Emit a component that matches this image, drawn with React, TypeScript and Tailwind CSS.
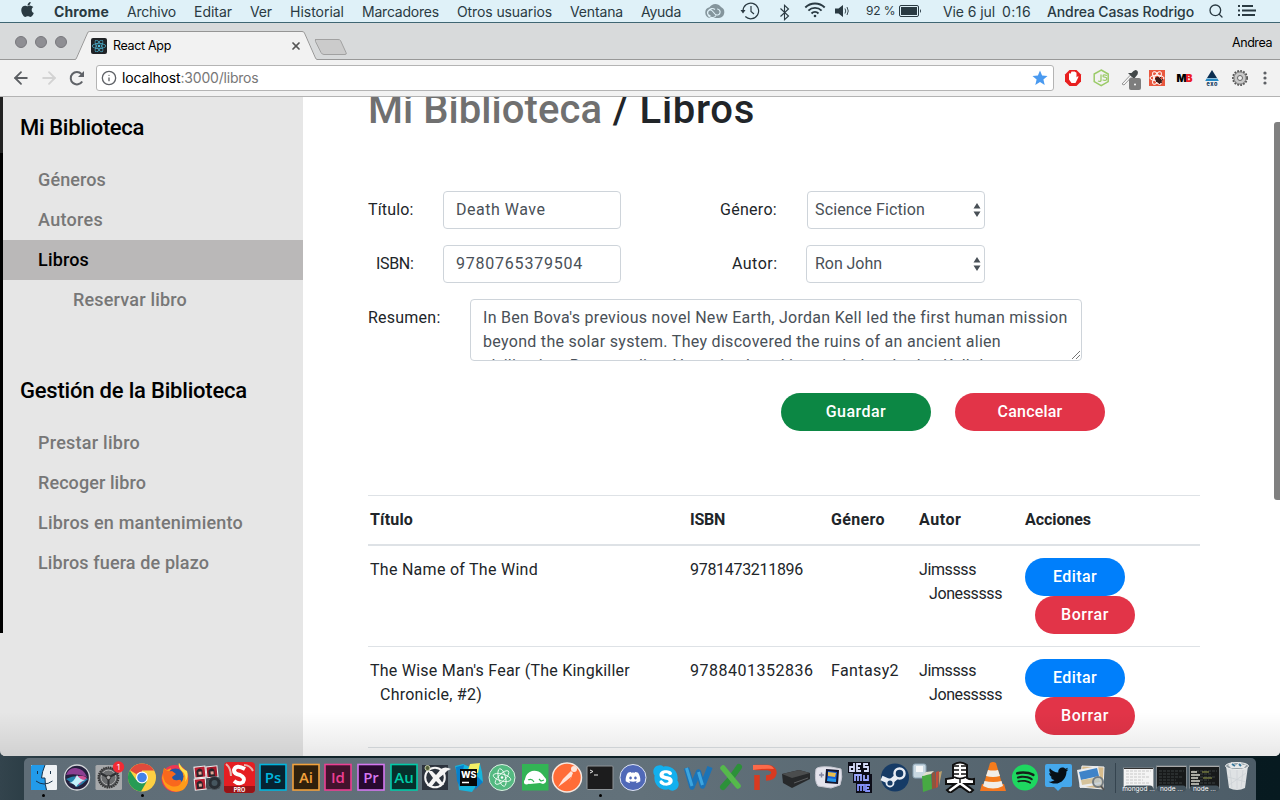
import { useLayoutEffect, useRef, type ReactNode } from "react";
import { ArrowLeft, ArrowRight, Info, Search, X } from "lucide-react";
import { FaApple, FaDiscord, FaReact, FaSkype, FaSpotify, FaTwitter } from "react-icons/fa";

/** One line of text whose tracking is adjusted to fill a given width. */
function Fit({ w, children, className = "" }: { w: number; children: string; className?: string }) {
  const ref = useRef<HTMLSpanElement>(null);
  useLayoutEffect(() => {
    const el = ref.current;
    if (!el) return;
    el.style.letterSpacing = "0px";
    const natural = el.getBoundingClientRect().width;
    el.style.letterSpacing = `${(w - natural) / children.length}px`;
  }, [w, children]);
  return (
    <span ref={ref} className={`inline-block shrink-0 whitespace-pre ${className}`}>
      {children}
    </span>
  );
}

const MENUS: [string, number][] = [
  ["Archivo", 49],
  ["Editar", 38],
  ["Ver", 22],
  ["Historial", 54],
  ["Marcadores", 77],
  ["Otros usuarios", 95],
  ["Ventana", 53],
  ["Ayuda", 40],
];

function MenuBar() {
  return (
    <div className="flex h-[23px] shrink-0 items-center border-b border-[#3f6673] bg-[#dff1f8] pl-[19px] text-[14px] text-[#2a3a42]">
      <FaApple className="mb-1 size-[17px] shrink-0" />
      <Fit w={55} className="ml-[18px] font-bold">Chrome</Fit>
      {MENUS.map(([t, w]) => (
        <Fit key={t} w={w} className="ml-[18px]">{t}</Fit>
      ))}
      <svg className="ml-[23px] h-[15px] w-[21px] shrink-0" viewBox="0 0 21 15">
        <path d="M6 14a5.500 5.500 0 0 1-.5-10.800A7 7 0 0 1 17 3a5.800 5.800 0 0 1-2 11z" fill="#84959c" />
        <path d="M12 11.500a4.500 4.500 0 1 1-1-6M6.500 11.500a2.800 2.800 0 1 1 .4-5.500c1.600.4 2.700 2.500 4 4a3 3 0 1 0 2.200-5" fill="none" stroke="#dff1f8" strokeWidth="1.100" />
      </svg>
      <svg className="ml-[15px] h-[18px] w-5 shrink-0" viewBox="0 0 20 18" fill="none" stroke="#2a3a42" strokeWidth="1.200">
        <path d="M3 9a7.800 7.800 0 1 1 2.300 5.500M11 4v5.500l3 2.500" />
        <path d="M.5 8h5L3 11.500z" fill="#2a3a42" stroke="none" />
      </svg>
      <svg className="mt-0.5 ml-[19px] h-[17px] w-3 shrink-0" viewBox="0 0 12 17" fill="none" stroke="#2a3a42" strokeWidth="1.100">
        <path d="m1.500 4.500 8 7.500-4 3.700V1.300l4 3.700-8 7.500" />
      </svg>
      <svg className="mb-0.5 ml-[13px] h-[16px] w-[22px] shrink-0" viewBox="0 0 22 16" fill="none" stroke="#2a3a42" strokeWidth="1.900">
        <path d="M1.300 5.500a13.700 13.700 0 0 1 19.400 0M4.400 8.600a9.300 9.300 0 0 1 13.200 0M7.500 11.500a5 5 0 0 1 7 0" />
        <circle cx="11" cy="14" r="1.300" fill="#2a3a42" stroke="none" />
      </svg>
      <svg className="ml-[9px] h-3 w-[14px] shrink-0" viewBox="0 0 14 12">
        <path d="M0 3.500h3.500L8 0v12L3.500 8.500H0z" fill="#2a3a42" />
        <path d="M10 3.500q1.500 2.500 0 5M12 2q2.500 4 0 8" fill="none" stroke="#2a3a42" strokeWidth=".9" />
      </svg>
      <Fit w={29.500} className="ml-[17px] text-[12px]">92 %</Fit>
      <svg className="ml-[3.500px] h-3 w-6 shrink-0" viewBox="0 0 24 12">
        <rect x=".5" y=".5" width="19" height="11" rx="1.500" fill="none" stroke="#2a3a42" />
        <path d="M2 2h16v8H2zM21 4q2 2 0 4z" fill="#2a3a42" />
      </svg>
      <Fit w={52} className="ml-5">Vie 6 jul</Fit>
      <Fit w={29} className="ml-[7px]">0:16</Fit>
      <Fit w={147} className="ml-4 font-medium">Andrea Casas Rodrigo</Fit>
      <Search className="ml-[14px] size-4 shrink-0" strokeWidth={2} />
      <svg className="ml-[14px] h-3 w-[18px] shrink-0" viewBox="0 0 18 12" fill="none" stroke="#2a3a42" strokeWidth="1.800">
        <path d="M0 1h2m2 0h11M0 5.500h2m2 0h14M0 10h2m2 0h13" />
      </svg>
    </div>
  );
}

function TabStrip() {
  return (
    <div className="flex h-9 shrink-0 items-start bg-[#d8dadb] text-[12px] text-black">
      <div className="flex h-[38px] w-[75px] items-center gap-2 pl-[15px]">
        <i className="size-3 rounded-full border border-[#77777c] bg-[#8e8e93]" />
        <i className="size-3 rounded-full border border-[#77777c] bg-[#8e8e93]" />
        <i className="size-3 rounded-full border border-[#77777c] bg-[#8e8e93]" />
      </div>
      <div className="relative h-[37px] w-[280px]">
        <svg className="absolute inset-0" width="280" height="37" viewBox="0 0 280 37">
          <path d="M0 37 12 10q.8-1.500 2-1.500h214q1.500 0 2 1.500l12 27z" fill="#f2f2f2" />
          <path d="M0 36.500q1 0 1.500-1.500L12.500 10q.5-1.500 2-1.500H227q2 0 2.500 1.500l11 25q.5 1.500 2 1.500" fill="none" stroke="#959595" />
          <path d="M240 16.500h23q2 0 2.500 1l5.500 12q1 2-1 2h-21q-2 0-3-2l-5.500-11q-.7-2 1-2" fill="#cbcbcb" stroke="#a1a1a1" />
        </svg>
        <div className="relative flex h-full items-center pt-[9px] pl-4">
          <div className="grid size-4 place-items-center rounded-[2px] bg-[#202326] text-[#50bddc]">
            <FaReact size={14} />
          </div>
          <Fit w={58} className="ml-1.5 text-[12.500px]">React App</Fit>
          <X className="ml-[119px] size-3 text-[#555]" strokeWidth={3.500} />
        </div>
      </div>
      <div className="flex-1 pt-[11px] pr-2 text-right">
        <Fit w={40} className="text-[12.500px]">Andrea</Fit>
      </div>
    </div>
  );
}

function Toolbar() {
  return (
    <div className="flex h-[38px] shrink-0 items-center border-y border-t-[#989898] border-b-[#b3b3b3] bg-[#f2f2f2] pl-[11px]">
      <ArrowLeft className="size-5 text-[#5c5f63]" strokeWidth={2.200} />
      <ArrowRight className="ml-2 size-5 text-[#d3d3d3]" strokeWidth={2.200} />
      <svg className="ml-[10px] size-4" viewBox="0 0 16 16">
        <path d="M13.200 11.500A6.200 6.200 0 1 1 12.500 4" fill="none" stroke="#5f6267" strokeWidth="2" />
        <path d="M15 1v6H9z" fill="#5f6267" />
      </svg>
      <div className="ml-[11px] flex h-[26px] w-[958px] items-center rounded-[3px] border border-[#b4b4b4] bg-white pl-1">
        <Info className="size-4 text-[#5f6267]" strokeWidth={2} />
        <div className="ml-[5px] text-[14px] leading-none text-[#777]">
          <Fit w={58.500} className="text-black">localhost</Fit>
          <Fit w={78}>:3000/libros</Fit>
        </div>
        <svg className="mr-[5px] ml-auto size-4" viewBox="0 0 16 16">
          <path d="m8 .5 2.100 5 5.400.5-4.100 3.600 1.300 5.400L8 12.100 3.300 15l1.300-5.400L.5 6l5.400-.5z" fill="#4a9af0" />
        </svg>
      </div>
      <svg className="ml-[9px] h-6 w-[216px]" viewBox="0 0 216 24">
        <path d="M6.500 4h7l4.500 4.500v7L13.500 20h-7L2 15.500v-7z" fill="#e82020" />
        <path d="M6 8q1-2 1.800 0l.4-2q1-1.600 1.800 0l.5-.6q1-.8 1.500.8 1.500-.5 1.500 1.400v4l1-1.200q1.500-.5.7 1.200L12.500 17h-4L6 13.500z" fill="#fff" />
        <path d="m38.200 4 7 4v7.600l-7 4-7-4V8z" fill="none" stroke="#9bcb68" strokeWidth="1.500" />
        <path d="M38 8.500v6q-.5 1.500-3 .5m9-5.500q-4-1.500-4 .7c0 1.600 3.800.4 3.800 2.600 0 2-2.500 2-4.200 1" fill="none" stroke="#9bcb68" strokeWidth="1.300" />
        <path d="m59 18 8.500-9 1.500 1.500-8 8.500z" fill="#f8f8f8" stroke="#969696" />
        <path d="m65 7 6 6 1.500-2 2-2.500q1.500-4-2-4.500-2 .5-4 3z" fill="#424748" />
        <rect x="66" y="12" width="12" height="12" rx="2" fill="#7d7d7d" />
        <circle cx="72" cy="18.500" r="1" fill="#fff" />
        <rect x="86" y="4" width="16" height="16" fill="#e9583f" />
        <g fill="none" stroke="#fff">
          <ellipse cx="94" cy="12" rx="7" ry="2.700" />
          <ellipse cx="94" cy="12" rx="7" ry="2.700" transform="rotate(60 94 12)" />
          <ellipse cx="94" cy="12" rx="7" ry="2.700" transform="rotate(120 94 12)" />
        </g>
        <ellipse cx="95.500" cy="14" rx="3.500" ry="2.500" transform="rotate(40 95.500 14)" fill="#3a1a17" />
        <path d="m93 16 5-5m-2 7 4-5m-8-1 7 5" stroke="#3a1a17" />
        <text x="113.500" y="16" fontSize="10.500" fontWeight="900" textLength="16" className="font-['Inter']">
          M<tspan fill="#ed1c24">B</tspan>
        </text>
        <path d="m149 4 5 8h-10z" fill="#0b2e50" />
        <path d="M143.600 12.500h10.800l1.400 2.500h-13.600z" fill="#2488c4" />
        <text x="143.500" y="19.500" fontSize="5.500" fontWeight="800" textLength="11" fill="#123b5f">exo</text>
        <circle cx="177" cy="12" r="7" fill="#bbb" stroke="#555" strokeWidth="2" strokeDasharray="1.700 1.300" />
        <circle cx="177" cy="12" r="6" fill="#c8c8c8" stroke="#888" />
        <circle cx="177" cy="12" r="2.500" fill="#eee" stroke="#666" />
        <g fill="#5d6065">
          <circle cx="202" cy="7" r="1.600" />
          <circle cx="202" cy="12" r="1.600" />
          <circle cx="202" cy="17" r="1.600" />
        </g>
      </svg>
    </div>
  );
}

function NavItem({ label, w, active, sub }: { label: string; w: number; active?: boolean; sub?: boolean }) {
  return (
    <a
      className={`flex h-10 items-center text-[18px] font-medium ${sub ? "pl-[70px]" : "pl-[35px]"} ${
        active ? "bg-[#bab8b8] text-black" : "text-[#777]"
      }`}
    >
      <Fit w={w}>{label}</Fit>
    </a>
  );
}

function Sidebar() {
  return (
    <nav className="w-[300px] shrink-0 bg-[#e6e6e6]">
      <h2 className="flex h-[63px] items-center pb-0.5 pl-[17px] text-[22px] font-medium text-black">
        <Fit w={124}>Mi Biblioteca</Fit>
      </h2>
      <NavItem label="Géneros" w={68} />
      <NavItem label="Autores" w={65} />
      <NavItem label="Libros" w={51} active />
      <NavItem label="Reservar libro" w={114} sub />
      <h2 className="mt-10 flex h-[63px] items-center pb-0.5 pl-[17px] text-[22px] font-medium text-black">
        <Fit w={227}>Gestión de la Biblioteca</Fit>
      </h2>
      <NavItem label="Prestar libro" w={102} />
      <NavItem label="Recoger libro" w={108} />
      <NavItem label="Libros en mantenimiento" w={205} />
      <NavItem label="Libros fuera de plazo" w={171} />
    </nav>
  );
}

function Field({ children, className }: { children: ReactNode; className: string }) {
  return (
    <div className={`flex h-[38px] items-center rounded border border-[#ced4da] bg-white text-[#495057] ${className}`}>
      {children}
    </div>
  );
}

function SelectArrows() {
  return (
    <svg className="mr-[3.500px] ml-auto h-[14px] w-2" viewBox="0 0 8 14">
      <path d="m4 0 3.500 5.500h-7zM4 14 .5 8.500h7z" fill="#495057" />
    </svg>
  );
}

const PILL = "flex h-[38px] items-center justify-center rounded-full font-medium text-white";

function BookForm() {
  return (
    <form className="mt-[54px]">
      <div className="flex items-center">
        <div className="w-[75px]"><Fit w={45.500}>Título:</Fit></div>
        <Field className="w-[178px] pl-3"><Fit w={89.500}>Death Wave</Fit></Field>
        <div className="ml-[99px] w-[87px]"><Fit w={57}>Género:</Fit></div>
        <Field className="w-[178px] pl-[7px]"><Fit w={110}>Science Fiction</Fit><SelectArrows /></Field>
      </div>
      <div className="mt-4 flex items-center">
        <div className="w-[75px] pl-2"><Fit w={37.500}>ISBN:</Fit></div>
        <Field className="w-[178px] pl-3"><Fit w={127}>9780765379504</Fit></Field>
        <div className="ml-[111px] w-[74px]"><Fit w={45.500}>Autor:</Fit></div>
        <Field className="w-[179px] pl-2"><Fit w={67}>Ron John</Fit><SelectArrows /></Field>
      </div>
      <div className="mt-4 flex">
        <div className="w-[102px] pt-[7px]"><Fit w={72.500}>Resumen:</Fit></div>
        <div className="relative h-[62px] w-[612px] overflow-hidden rounded border border-[#ced4da] pt-1.5 pl-3 text-[#495057]">
          <Fit w={584}>In Ben Bova's previous novel New Earth, Jordan Kell led the first human mission</Fit>
          <Fit w={518}>beyond the solar system. They discovered the ruins of an ancient alien</Fit>
          <Fit w={520}>civilization. But one alien AI survived, and it revealed to Jordan Kell that</Fit>
          <svg className="absolute right-px bottom-px size-2" viewBox="0 0 8 8" stroke="#666" strokeWidth=".9">
            <path d="m0 8 8-8M4 8l4-4" />
          </svg>
        </div>
      </div>
      <div className="mt-8 flex gap-6 pl-[413px]">
        <div className={`${PILL} w-[150px] bg-[#0c8744]`}><Fit w={60.500}>Guardar</Fit></div>
        <div className={`${PILL} w-[150px] bg-[#e23448]`}><Fit w={65}>Cancelar</Fit></div>
      </div>
    </form>
  );
}

function BookRow({ title, isbn, isbnW, genre }: { title: ReactNode; isbn: string; isbnW: number; genre?: string }) {
  return (
    <div className="grid h-[101px] grid-cols-[320px_141px_88px_106px_1fr] border-b border-[#dee2e6] pt-3 pl-0.5">
      <div>{title}</div>
      <div><Fit w={isbnW}>{isbn}</Fit></div>
      <div>{genre && <Fit w={68}>{genre}</Fit>}</div>
      <div>
        <Fit w={57}>Jimssss</Fit>
        <br />
        <Fit w={73} className="ml-2.5">Jonesssss</Fit>
      </div>
      <div>
        <div className={`${PILL} w-[100px] bg-[#007ffb]`}><Fit w={44}>Editar</Fit></div>
        <div className={`${PILL} ml-2.5 w-[100px] bg-[#e23448]`}><Fit w={48}>Borrar</Fit></div>
      </div>
    </div>
  );
}

function BookTable() {
  return (
    <section className="mt-16 w-[832px] border-t border-[#dee2e6]">
      <div className="grid h-[50px] grid-cols-[320px_141px_88px_106px_1fr] border-b-2 border-[#dee2e6] pt-3 pl-0.5 font-bold">
        <div><Fit w={43}>Título</Fit></div>
        <div><Fit w={35}>ISBN</Fit></div>
        <div><Fit w={54}>Género</Fit></div>
        <div><Fit w={42.500}>Autor</Fit></div>
        <div><Fit w={66}>Acciones</Fit></div>
      </div>
      <BookRow title={<Fit w={168}>The Name of The Wind</Fit>} isbn="9781473211896" isbnW={113} />
      <BookRow
        title={
          <>
            <Fit w={260}>The Wise Man's Fear (The Kingkiller</Fit>
            <br />
            <Fit w={102} className="ml-2.5">Chronicle, #2)</Fit>
          </>
        }
        isbn="9788401352836"
        isbnW={123.500}
        genre="Fantasy2"
      />
    </section>
  );
}

function AdobeTile({ t, c, bg }: { t: string; c: string; bg: string }) {
  return (
    <>
      <rect x="3" y="3.500" width="26" height="25.500" fill={bg} stroke={c} strokeWidth="1.600" />
      <text x="16" y="21.500" fontSize="15" fontWeight="600" textAnchor="middle" fill={c} className="font-['Open_Sans']">{t}</text>
    </>
  );
}

const DOCK: { icon: ReactNode; running?: boolean }[] = [
  {
    running: true,
    icon: (
      <>
        <rect x="3" y="4" width="26" height="25" rx="1" fill="#eef2f5" />
        <path d="M4 4h13q-3 7-3.500 13h3.500q0 7 1.500 12H3V5z" fill="#229bea" />
        <path d="M9.500 10v3M22.500 10v3M8 20q8 6 16.500 0M17 4q-3 7-3.500 13H17q0 7 1.500 12" fill="none" stroke="#19344c" strokeWidth="1" />
      </>
    ),
  },
  {
    icon: (
      <>
        <circle cx="16" cy="16.500" r="12.500" fill="#24203d" stroke="#d4d7da" strokeWidth="1.300" />
        <path d="M5 14q3-8 10-7 8 1 11 9-10-4-21-2" fill="#8c3f92" />
        <path d="M5 18q12-6 22 0-5 5-11 8-5-4-11-8" fill="#2583ad" />
        <path d="M14 16q7-3 12 1-5 3-8 7z" fill="#cf4f95" />
        <path d="M8 22q5-1 8-8 3 5 8 5-6 2-9 7-2-4-7-4" fill="#c5f0fa" />
      </>
    ),
  },
  {
    icon: (
      <>
        <rect x="2.500" y="4" width="26.500" height="25" rx="1.500" fill="#a7a9ab" />
        <circle cx="15.500" cy="16.500" r="10" fill="#505255" stroke="#333" strokeWidth="2" strokeDasharray="1.500 .8" />
        <circle cx="15.500" cy="16.500" r="7.500" fill="#6b6d6f" stroke="#b5b5b5" />
        <path d="M15.500 16.500V25m0-8.500L8 12.500m7.500 4 7.500-4" stroke="#2d2f32" strokeWidth="2" />
        <circle cx="15.500" cy="16.500" r="2.200" fill="#aaa" stroke="#333" />
        <circle cx="25.500" cy="6" r="5.700" fill="#f22b34" />
        <text x="25.500" y="9" fontSize="8" fill="#fff" textAnchor="middle">1</text>
      </>
    ),
  },
  {
    running: true,
    icon: (
      <>
        <circle cx="16" cy="16.500" r="14" fill="#fdd043" />
        <path d="M16 16.500 4 9.300A14 14 0 0 1 28.200 9.500H16z" fill="#e04a3c" />
        <path d="M3.800 9.500A14 14 0 0 0 15 30.500l6.200-10.800-11-.8z" fill="#279b54" />
        <circle cx="16" cy="16.500" r="6" fill="#fff" />
        <circle cx="16" cy="16.500" r="4.800" fill="#4483e9" />
      </>
    ),
  },
  {
    icon: (
      <>
        <circle cx="16" cy="17.500" r="13.500" fill="#ee3853" />
        <path d="M20 2q2 4 6 7 7 12-2 20-8 4-15-1-5-4-6-11l2-10 3 2 4-2-1 4q6-2 9 2 2-4 1-6-2-4-1-5" fill="#ff9b19" />
        <circle cx="16.500" cy="15.500" r="8" fill="#2357a5" />
        <path d="M5 7q3 4 8 3l4 3-4 3q1 4 6 3 4-1 3 3-3 5-10 3-8-3-8-12z" fill="#f9681d" />
        <path d="M20 2q-1 4 2 7 6 5 4 12 4-5 2-11-6-3-8-8" fill="#ffe14c" />
      </>
    ),
  },
  {
    icon: (
      <>
        <g transform="rotate(-6 15 16)">
          <rect x="4" y="5" width="11" height="11" fill="#b72032" stroke="#eee" />
          <rect x="16" y="6" width="11" height="11" fill="#a71829" stroke="#eee" />
          <rect x="3" y="17" width="11" height="11" fill="#b72032" stroke="#eee" />
          <path d="M6 15V9q4-4 6 0v6zm12 1v-6q4-4 6 0v6zM5 27v-6q4-4 6 0v6z" fill="#28252b" />
          <path d="M8 10h3v3H8zm12 1h3v3h-3zM7 22h3v3H7z" fill="#e0a595" />
        </g>
        <rect x="15" y="17" width="14" height="11" rx="2" fill="#444b51" />
        <circle cx="23.500" cy="22" r="6.500" fill="#292e34" stroke="#4d555b" />
        <circle cx="23.500" cy="22" r="3" fill="#46565f" />
      </>
    ),
  },
  {
    icon: (
      <>
        <rect x="0" y="1" width="31" height="31" rx="4" fill="#e51e22" />
        <path d="M0 25h31v3q0 4-4 4H4q-4 0-4-4z" fill="#981316" />
        <path d="M2 3q5 4 5 12m13-11q6 0 9 6" fill="none" stroke="#e5b4ae" strokeWidth="2" />
        <path d="M21 8q-9-5-11 1 0 4 6 5 6 3 3 7-4 3-9-1" fill="none" stroke="#fff" strokeWidth="4" />
        <text x="15.500" y="30.500" fontSize="5.500" fontWeight="700" textAnchor="middle" fill="#fff">PRO</text>
      </>
    ),
  },
  { icon: <AdobeTile t="Ps" c="#00b6de" bg="#062331" /> },
  { icon: <AdobeTile t="Ai" c="#f2a13b" bg="#30200c" /> },
  { icon: <AdobeTile t="Id" c="#ed3f93" bg="#42132d" /> },
  { icon: <AdobeTile t="Pr" c="#d577f0" bg="#27092f" /> },
  { icon: <AdobeTile t="Au" c="#00cba8" bg="#06302c" /> },
  {
    icon: (
      <>
        <rect x="2" y="4" width="26" height="25" fill="#2c333d" />
        <circle cx="15" cy="16.500" r="9.800" fill="none" stroke="#f5f5f5" strokeWidth="2" />
        <path d="M8 10h4l4 4 5-6q4-3 10 0-4 1-7 5l-5 4 5 7h-4l-4-4-4 5H7l6-8z" fill="#f5f5f5" />
        <circle cx="7.500" cy="7" r="2.500" fill="#53603b" stroke="#c5ccaa" />
      </>
    ),
  },
  {
    icon: (
      <>
        <path d="M2 5 10 3l7 3 10-3 2 8 1 10-7 4-4 6-13-2-1-11z" fill="#16b5dc" />
        <path d="m17 3 10-1-2 10-10-3z" fill="#f4ee65" />
        <path d="m3 6 8-2-4 22-3-6zm20 8 7 7-8 8z" fill="#087fcb" />
        <rect x="7" y="8" width="17" height="17" fill="#080808" />
        <text x="8" y="17" fontSize="9" fontWeight="800" fill="#fff">WS</text>
        <path d="M9 21.500h7" stroke="#fff" strokeWidth="1.500" />
      </>
    ),
  },
  {
    icon: (
      <>
        <circle cx="16" cy="16.500" r="13" fill="#54b981" stroke="#dbf1e3" />
        <g fill="none" stroke="#eefbf3" strokeWidth=".9">
          <ellipse cx="16" cy="16.500" rx="9" ry="3.500" transform="rotate(15 16 16.500)" />
          <ellipse cx="16" cy="16.500" rx="9" ry="3.500" transform="rotate(75 16 16.500)" />
          <ellipse cx="16" cy="16.500" rx="9" ry="3.500" transform="rotate(135 16 16.500)" />
        </g>
        <circle cx="16" cy="16.500" r="1.300" fill="#fff" />
      </>
    ),
  },
  {
    icon: (
      <>
        <rect x="3" y="3" width="26.500" height="26.500" fill="#33b455" />
        <path d="M6 18q1-6 7-8 6-1 10 3l4 5q1 4-3 5l-3-1-10 1-6-1z" fill="#fff" />
        <path d="M9 19q4-2 6 2m5-3 2 2 3-1" fill="none" stroke="#33b455" strokeWidth="1.100" />
        <circle cx="7.500" cy="21" r="2.500" fill="#fff" />
      </>
    ),
  },
  {
    icon: (
      <>
        <circle cx="16" cy="16.500" r="14.500" fill="#ff6c37" stroke="#f7e9e1" strokeWidth="1.500" />
        <circle cx="23" cy="8" r="3" fill="#ffe4d9" />
        <path d="m20 10-8 8-5 8 8-6 6-5-3 6 4-9z" fill="#ffe4d9" />
      </>
    ),
  },
  {
    running: true,
    icon: (
      <>
        <rect x="3" y="5" width="26" height="23.500" rx="1" fill="#1c1c1d" stroke="#8f9599" />
        <path d="m6 9 3 1.500L6 12m4 2h4" fill="none" stroke="#e8e8e8" />
      </>
    ),
  },
  {
    icon: (
      <>
        <circle cx="16" cy="16.500" r="13" fill="#5069b8" stroke="#dfe5f4" />
        <FaDiscord x={8} y={8.500} size={16} color="#fff" />
      </>
    ),
  },
  {
    icon: <><circle cx="16" cy="17" r="9" fill="#fff" /><FaSkype x={1.500} y={2.500} size={29} color="#12b0ef" /></>,
  },
  {
    icon: <><path d="m4.500 7 5.500 19 6.500-15 4 14L28 6" fill="none" stroke="#1b73b7" strokeWidth="5.500" strokeLinejoin="round" /><path d="m4.500 7 5.500 18m6.500-14 4 13" stroke="#3ca5df" strokeWidth="3" /></>,
  },
  {
    icon: <><path d="m24 6-7 10-9 10" stroke="#2c9139" strokeWidth="6" strokeLinecap="round" /><path d="m8 7 15 18" stroke="#55b94b" strokeWidth="5.500" strokeLinecap="round" /></>,
  },
  {
    icon: <><path d="M9 29V14M7 6.500h13q6 1 6 5.500-1 5-8 5" fill="none" stroke="#d93a20" strokeWidth="5.500" /><path d="M5 4h14q5 0 7 4-8-1-21 1z" fill="#fb6a4a" /></>,
  },
  {
    icon: <><path d="m2 13 17-4 11 3v6L12 27l-9-5z" fill="#27292b" /><path d="m2 13 17-4 11 3-18 5z" fill="#4b4d4e" /><path d="m14 22 14-5" fill="none" stroke="#5d5f61" /></>,
  },
  {
    icon: <><path d="M3 8q2-3 15-2l10 2q2 8-1 16l-9 3-13-2q-4-5-2-17" fill="#e3e3ec" stroke="#c5c6d0" /><path d="m13 8 13 1-1 14-13-1z" fill="#15162d" /><path d="m15 10 9 1-1 10-9-1z" fill="#125fe0" /><path d="m15 11 8 1-1 4-7-1z" fill="#ebbf4d" /><path d="m15 17 8 1v3l-9-1z" fill="#2798e6" /><path d="M6 14h5M8.500 11.500v5" stroke="#8285a0" strokeWidth="1.500" /></>,
  },
  {
    icon: (
      <>
        <path d="M2 1h22v12h2v19H10V22H7V12H2z" fill="#0c0d18" />
        <g fill="none" stroke="#d5dbf8" strokeWidth="1.800">
          <path d="M8 2v8H4V6h4m7-3h-4v7h4m-4-3h3m8-4h-4v3h4v4h-4" />
          <path d="M9 20v-6h3v6m0-6h3v6m3-6v5h4v-5" stroke="#9ba8ff" />
          <path d="M12 30v-6h3v6m0-6h3v6m6-6h-4v6h4m-4-3h3" stroke="#8290f8" />
        </g>
      </>
    ),
  },
  {
    icon: <><circle cx="16" cy="16.500" r="14" fill="#163b66" /><path d="m2.500 17 9 4 8-7" fill="none" stroke="#e8edf5" strokeWidth="5" /><circle cx="20.500" cy="12.500" r="5" fill="#163b66" stroke="#e8edf5" strokeWidth="2.500" /><circle cx="11" cy="22" r="3.500" fill="#163b66" stroke="#e8edf5" strokeWidth="1.800" /></>,
  },
  {
    icon: <><rect x="2" y="3" width="13" height="14" rx="2" fill="#c8d8e2" stroke="#8ba4b5" /><path d="M5 5h7v6H5z" fill="#f5f7f8" /><path d="m11 15 9-2 1 15-9 3z" fill="#47aa43" /><path d="m11 15 4-4 8-1-3 3z" fill="#e1e0ce" /><path d="m21 12 3-1 1 16-4 1z" fill="#93543b" /><path d="m25 11 3-1-1 16-2 1z" fill="#c34d3b" /><path d="m28 11 3-1-3 15z" fill="#bba16e" /></>,
  },
  {
    icon: <><path d="M9 4q7-5 14 0v13q3 2 7 1v5q-5 0-9 0l8 6-3 3-10-7-10 7-3-3 8-6H2v-5l7-1z" fill="#fff" stroke="#101010" strokeWidth="2" /><path d="M10 5h5m2 0h5M10 9h5m2 0h5M10 13h5m2 0h5" stroke="#101010" strokeWidth="1.700" /><path d="M10 16q6 3 12 0M16 17v5" fill="none" stroke="#101010" strokeWidth="1.500" /></>,
  },
  {
    icon: <><path d="m5 23-2 7h26l-2-7z" fill="#f47721" /><path d="m13 2-7 24q10 5 20 0L19 2q-3-2-6 0" fill="#f47b1c" /><path d="m11 9-2 6q7 2 14 0l-2-6q-5 1-10 0M7.500 20 6 25q10 5 20 0l-1.500-5q-8 2-17 0" fill="#f1eee8" /></>,
  },
  {
    icon: <><circle cx="16" cy="16.500" r="11" fill="#152018" /><FaSpotify x={2.500} y={3} size={27} color="#1ed760" /></>,
  },
  {
    icon: <><path d="M5 3h23q2 0 2 2v19q0 2-2 2h-8l-4 4-4-4H5q-2 0-2-2V5q0-2 2-2" fill="#45a8ec" /><FaTwitter x={6.500} y={4.500} size={20} color="#071017" /></>,
  },
  {
    icon: <><path d="m7 5 22 1-1 22L5 26z" fill="#d7bc8c" stroke="#eee" /><path d="m2 9 21-4 3 18-21 4z" fill="#e9ecef" /><path d="m4 11 18-4 2 8-18 4z" fill="#3f83c8" /><path d="m6 19 18-3 1 5-18 3z" fill="#d5c39c" /><circle cx="23" cy="21" r="5" fill="#bbc8ceaa" stroke="#737b80" strokeWidth="2" /><path d="m26 25 3 4" stroke="#555" strokeWidth="2" /></>,
  },
];

function WindowThumb({ label, light, tint }: { label: string; light?: boolean; tint?: string }) {
  return (
    <svg className="h-8 w-[33px] shrink-0" viewBox="0 0 33 32">
      <rect x="1.500" y={light ? 7 : 5} width="30" height={light ? 20 : 22} fill={light ? "#f4f4f4" : "#17191a"} stroke="#8d969b" strokeWidth=".8" />
      <path d={light ? "M2 7.500h29" : "M2 5.500h29"} stroke={light ? "#333" : "#aaa"} />
      <path d="M4 10h25M4 13h20M4 16h24M4 19h17M4 22h23" stroke={light ? "#c8c8c8" : "#3c4242"} strokeDasharray="3 1" />
      {tint && <path d="M3 11h6M3 14h9M3 17h7M3 20h9M3 23h8" stroke="#d9d9cf" strokeWidth="1.400" />}
      {tint && <path d="M14 11h7M15 17h9" stroke={tint} />}
      <rect x="2" y="24.500" width="29" height="6" rx="3" fill="#43525c" />
      <text x="16.500" y="29.500" fontSize="6.500" textAnchor="middle" fill="#fff">{label}</text>
    </svg>
  );
}

function Dock() {
  return (
    <div className="flex h-[42px] w-[1232px] items-start rounded-t-[5px] bg-linear-to-r from-[#5f6d77] via-[#62717a] to-[#4d5d68] pt-[3px] pl-[3.500px]">
      {DOCK.map((d, i) => (
        <div key={i} className="flex w-[32.730px] shrink-0 flex-col items-center">
          <svg className="size-8" viewBox="0 0 32 32">{d.icon}</svg>
          {d.running && <i className="mt-px size-[3px] rounded-full bg-black" />}
        </div>
      ))}
      <i className="mt-0.5 mr-[6px] ml-[7.500px] h-[30px] w-px bg-[#35444f]" />
      <WindowThumb label="mongod ..." light />
      <WindowThumb label="node ..." />
      <WindowThumb label="node ..." tint="#9ba24c" />
      <svg className="h-8 w-8 shrink-0" viewBox="0 0 32 32">
        <path d="m5 5 3 22q8 4 16 0l3-22z" fill="#dfe2e4" />
        <path d="m9 9 2 18m5-18v19m6-19-2 18M7 16l18 5M8 24l17-12" stroke="#cdd2d6" strokeWidth=".8" />
        <ellipse cx="16" cy="5" rx="11.500" ry="3.500" fill="#929da3" stroke="#eef0f1" />
        <path d="m7 4 4-3 4 3 4-3 3 3 4-1-3 4H10z" fill="#e5e8e9" />
        <path d="m11 3 3 2m4-2 2 2" stroke="#39789b" strokeWidth="2" />
      </svg>
    </div>
  );
}

export default function App() {
  return (
    <div className="flex h-[800px] w-[1280px] flex-col overflow-hidden bg-linear-to-r from-[#33444d] from-0% via-[#13262c] via-10% to-[#071a20] font-['Inter','Liberation_Sans',sans-serif]">
      <MenuBar />
      <div className="flex h-[733px] shrink-0 flex-col overflow-hidden rounded-b-[5px] bg-[#e6e6e6]">
        <TabStrip />
        <Toolbar />
        <div className="relative flex min-h-0 flex-1 font-['Roboto','Noto_Sans',sans-serif] text-[16px] leading-6 text-[#212529]">
          <div className="flex w-[3px] shrink-0 flex-col">
            <i className="h-14 bg-[#222]" />
            <i className="h-[480px] bg-black" />
          </div>
          <Sidebar />
          <main className="min-w-0 flex-1 overflow-hidden bg-white pl-[65px]">
            <h1 className="-mt-3 h-[52px] text-[40px] leading-[50px] font-medium whitespace-nowrap">
              <Fit w={234} className="text-[#707070]">Mi Biblioteca</Fit>
              <Fit w={153}>{" / Libros"}</Fit>
            </h1>
            <BookForm />
            <BookTable />
          </main>
          <i className="absolute top-[25px] right-0 h-[378px] w-[6px] rounded-l-[3px] bg-[#808080]" />
          <div className="absolute inset-x-0 bottom-0 h-11 bg-linear-to-b from-transparent to-black/9" />
        </div>
      </div>
      <div className="mt-0.5 flex justify-center">
        <Dock />
      </div>
    </div>
  );
}
